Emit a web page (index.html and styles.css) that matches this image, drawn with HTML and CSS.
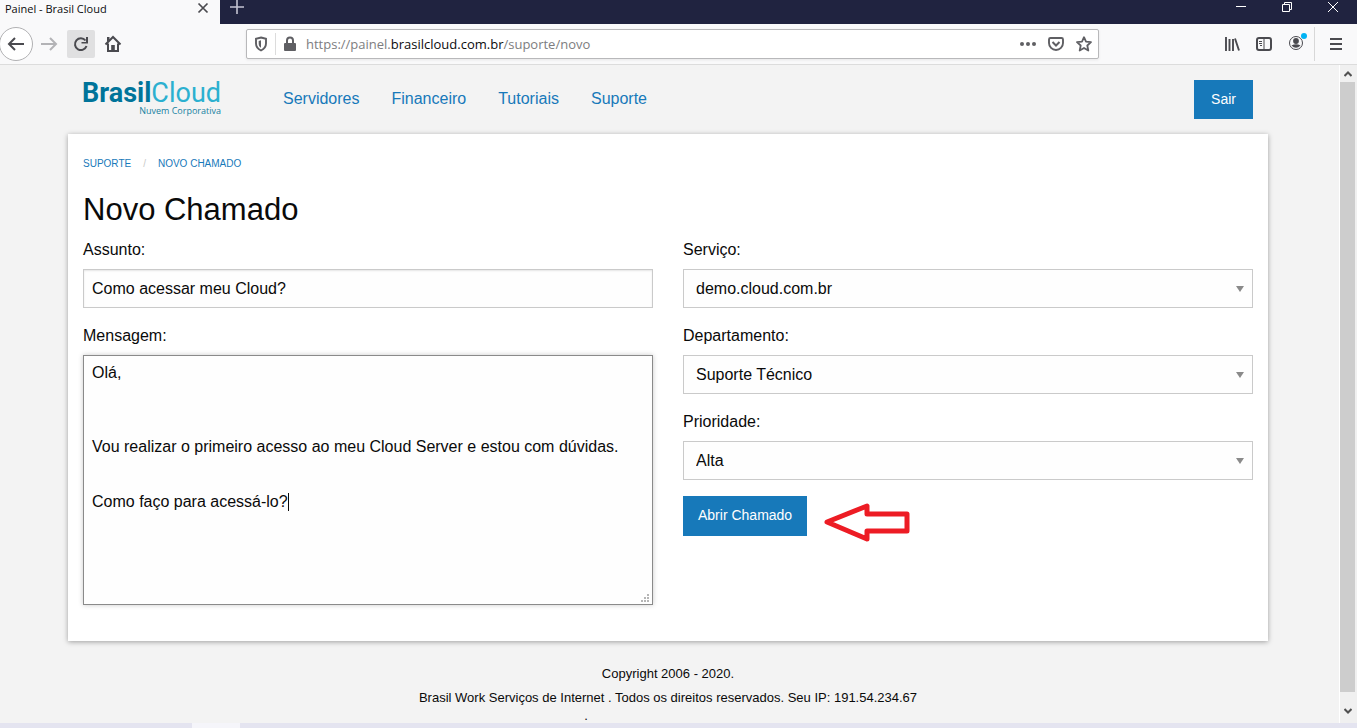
FILE: index.html
```html
<!DOCTYPE html>
<html lang="pt-BR">
<head>
<meta charset="utf-8">
<meta name="viewport" content="width=device-width, initial-scale=1">
<title>Painel - Brasil Cloud</title>
<link rel="stylesheet" href="styles.css">
</head>
<body>
<div class="titlebar">
  <div class="tab">
    <span class="tab-title">Painel - Brasil Cloud</span>
    <button class="icon-btn" aria-label="Fechar aba"><svg width="12" height="12" viewBox="0 0 12 12"><path d="M1.500 1.500l9 9M10.500 1.500l-9 9" stroke="#4a4a4f" stroke-width="1.700"/></svg></button>
  </div>
  <button class="icon-btn new-tab" aria-label="Nova aba"><svg width="14" height="14" viewBox="0 0 14 14"><path d="M7 0v14M0 7h14" stroke="#c4c4d2" stroke-width="1.600"/></svg></button>
  <div class="window-controls">
    <button class="icon-btn" aria-label="Minimizar"><svg width="12" height="12" viewBox="0 0 12 12"><path d="M1 5.500h10" stroke="#fff"/></svg></button>
    <button class="icon-btn" aria-label="Restaurar"><svg width="12" height="12" viewBox="0 0 12 12"><path d="M1.500 3.500h7v7h-7zM3.500 3.500v-2h7v7h-2" fill="none" stroke="#fff"/></svg></button>
    <button class="icon-btn" aria-label="Fechar"><svg width="12" height="12" viewBox="0 0 12 12"><path d="M1 1l10 10M11 1L1 11" stroke="#fff"/></svg></button>
  </div>
</div>

<div class="toolbar">
  <div class="nav-buttons">
    <button class="icon-btn back" aria-label="Voltar"><svg width="18" height="16" viewBox="0 0 18 16"><path d="M8 2L2 8l6 6M2 8h15" fill="none" stroke="#4a4a4f" stroke-width="2"/></svg></button>
    <button class="icon-btn forward" aria-label="Avançar"><svg width="18" height="16" viewBox="0 0 18 16"><path d="M10 2l6 6-6 6M16 8H1" fill="none" stroke="#b3b3b6" stroke-width="2"/></svg></button>
    <button class="icon-btn reload" aria-label="Recarregar"><svg width="16" height="16" viewBox="0 0 16 16"><path d="M12.500 4.500A5.900 5.900 0 1 0 13.500 10" fill="none" stroke="#4a4a4f" stroke-width="2"/><path d="M15 1v6.500H8.500V6H13V1z" fill="#4a4a4f"/></svg></button>
    <button class="icon-btn home" aria-label="Início"><svg width="18" height="18" viewBox="0 0 18 18"><path d="M1.500 9.500L9 2l7.500 7.500M4 8.500V16h10V8.500" fill="none" stroke="#4a4a4f" stroke-width="2"/><path d="M7.200 15v-5h3.600v5M3 2h2.500v3L3 7z" fill="#4a4a4f"/></svg></button>
  </div>
  <div class="urlbar">
    <svg class="shield" width="14" height="16" viewBox="0 0 14 16"><path d="M7 1.500l5 1.300v4.700c0 3.500-2 5.500-5 7-3-1.500-5-3.500-5-7V2.800z" fill="none" stroke="#5f5f63" stroke-width="1.900"/><path d="M7 4.300v7.500C5.300 10.800 4.700 9.500 4.700 7.500V4.900z" fill="#5f5f63"/></svg>
    <span class="divider"></span>
    <svg class="lock" width="12" height="16" viewBox="0 0 12 16"><path d="M3 8V4.500a3 3 0 0 1 6 0V8" fill="none" stroke="#5f5f63" stroke-width="2"/><rect y="7" width="12" height="8" rx="1" fill="#5f5f63"/></svg>
    <span class="url">https://painel.<b>brasilcloud.com.br</b>/suporte/novo</span>
    <div class="url-actions">
      <svg width="16" height="16" viewBox="0 0 16 16" fill="#5f5f63"><circle cx="2" cy="8" r="2"/><circle cx="8" cy="8" r="2"/><circle cx="14" cy="8" r="2"/></svg>
      <svg width="16" height="16" viewBox="0 0 16 16"><path d="M2.500 2h11q1.500 0 1.500 1.500V7A7 7 0 0 1 1 7V3.500Q1 2 2.500 2z" fill="none" stroke="#5f5f63" stroke-width="1.900"/><path d="M4.500 6L8 9.500 11.500 6" fill="none" stroke="#5f5f63" stroke-width="2"/></svg>
      <svg width="16" height="16" viewBox="0 0 16 16"><path d="M8 1.200l2 4.500 5 .5-3.700 3.300 1 5L8 12l-4.300 2.500 1-5L1 6.200l5-.5z" fill="none" stroke="#5f5f63" stroke-width="1.800" stroke-linejoin="round"/></svg>
    </div>
  </div>
  <div class="tools">
    <svg width="16" height="16" viewBox="0 0 16 16"><path d="M2 1v14M5.500 3v12M9 3v12M11 2.500L15 14.500" fill="none" stroke="#4a4a4f" stroke-width="1.900"/></svg>
    <svg width="16" height="16" viewBox="0 0 16 16"><rect x="1" y="2" width="14" height="12" rx="2" fill="none" stroke="#4a4a4f" stroke-width="2"/><path d="M8 2v12M3 5.500h3M3 7.500h3M4 9.500h2" stroke="#4a4a4f"/></svg>
    <svg class="account" width="20" height="20" viewBox="0 0 20 20"><circle cx="8" cy="11" r="6.500" fill="none" stroke="#4a4a4f"/><circle cx="8" cy="9" r="2.900" fill="#4a4a4f"/><path d="M3.500 13.500q4.500-2.500 9 0Q8 18 3.500 13.500z" fill="#4a4a4f"/><circle cx="16" cy="4" r="3" fill="#00b3f4"/></svg>
    <button class="icon-btn menu" aria-label="Menu"><svg width="12" height="14" viewBox="0 0 12 14"><path d="M0 2h12M0 7h12M0 12h12" stroke="#4a4a4f" stroke-width="2"/></svg></button>
  </div>
</div>

<div class="viewport">
  <div class="page">
    <header class="site-header">
      <a class="logo" href="#"><span class="logo-name"><strong>Brasil</strong>Cloud</span><span class="logo-tag">Nuvem Corporativa</span></a>
      <nav class="site-nav">
        <a href="#">Servidores</a><a href="#">Financeiro</a><a href="#">Tutoriais</a><a href="#">Suporte</a>
      </nav>
      <button class="btn btn-exit">Sair</button>
    </header>

    <main class="card">
      <nav class="breadcrumb" aria-label="Navegação"><a href="#">SUPORTE</a><span class="slash">/</span><a href="#">NOVO CHAMADO</a></nav>
      <h1 class="title">Novo Chamado</h1>
      <form class="form">
        <div class="column">
          <label class="label" for="assunto">Assunto:</label>
          <input class="field" id="assunto" type="text" value="Como acessar meu Cloud?">
          <label class="label" for="mensagem">Mensagem:</label>
          <div class="message-wrap">
            <textarea class="field message" id="mensagem">Olá,



Vou realizar o primeiro acesso ao meu Cloud Server e estou com dúvidas.


Como faço para acessá-lo?</textarea>
            <span class="caret"></span>
            <svg class="grip" width="8" height="8" viewBox="0 0 8 8" fill="#b5b5b5"><path d="M6 0h2v2H6zM3 3h2v2H3zM6 3h2v2H6zM0 6h2v2H0zM3 6h2v2H3zM6 6h2v2H6z"/></svg>
          </div>
        </div>
        <div class="column">
          <label class="label" for="servico">Serviço:</label>
          <div class="select-wrap"><select class="field select" id="servico"><option>demo.cloud.com.br</option></select></div>
          <label class="label" for="departamento">Departamento:</label>
          <div class="select-wrap"><select class="field select" id="departamento"><option>Suporte Técnico</option></select></div>
          <label class="label" for="prioridade">Prioridade:</label>
          <div class="select-wrap"><select class="field select" id="prioridade"><option>Alta</option></select></div>
          <div class="submit-row">
            <button class="btn btn-submit" type="button">Abrir Chamado</button>
            <svg class="arrow" width="86" height="40" viewBox="0 0 86 40"><path d="M3 20L43 4v8h40v17H43v8z" fill="none" stroke="#ed1c24" stroke-width="5" stroke-linejoin="round"/></svg>
          </div>
        </div>
      </form>
    </main>

    <footer class="footer">
      <p>Copyright 2006 - 2020.</p>
      <p>Brasil Work Serviços de Internet . Todos os direitos reservados. Seu IP: 191.54.234.67</p>
      <p class="footer-dot">.</p>
    </footer>
  </div>
  <div class="scrollbar">
    <svg width="8" height="6" viewBox="0 0 8 6"><path d="M.5 5L4 1.500 7.500 5" fill="none" stroke="#505050" stroke-width="2"/></svg>
    <div class="thumb"></div>
    <svg width="8" height="6" viewBox="0 0 8 6"><path d="M.5 1L4 4.500 7.500 1" fill="none" stroke="#505050" stroke-width="2"/></svg>
  </div>
</div>
<div class="taskbar"><span class="taskbar-item"></span></div>
</body>
</html>
```
FILE: styles.css
```css
* { box-sizing: border-box; }

body {
  margin: 0;
  min-height: 100vh;
  display: flex;
  flex-direction: column;
  background: #f3f3f3;
  color: #0a0a0a;
  font: 16px/24px "Liberation Sans", Arial, sans-serif;
}

svg { display: block; flex: none; }
a { color: #1779ba; text-decoration: none; }
p { margin: 0; }

.icon-btn {
  display: flex;
  align-items: center;
  justify-content: center;
  padding: 0;
  border: 0;
  background: none;
}

/* Browser chrome */
.titlebar {
  display: flex;
  height: 24px;
  background: #202340;
}
.tab {
  display: flex;
  justify-content: space-between;
  width: 220px;
  height: 24px;
  padding: 0 11px 0 5px;
  background: #f9f9fa;
  color: #0c0c0d;
  font: 11px/18px "Open Sans", sans-serif;
}
.tab .icon-btn { height: 16px; }
.new-tab { height: 14px; margin-left: 10px; }
.window-controls {
  display: flex;
  gap: 34px;
  margin-left: auto;
  padding: 1px 18px 0 0;
}
.window-controls .icon-btn { height: 12px; }

.toolbar {
  display: flex;
  align-items: center;
  height: 41px;
  background: #f9f9fa;
  border-bottom: 1px solid #dcdcdc;
}
.nav-buttons {
  display: flex;
  align-items: center;
  width: 246px;
}
.back {
  width: 34px;
  height: 34px;
  margin-left: -1px;
  border: 1px solid #b1b1b3;
  border-radius: 50%;
  background: #fff;
}
.forward { margin-left: 7px; }
.reload {
  width: 28px;
  height: 28px;
  margin-left: 9px;
  border-radius: 2px;
  background: #e0e0e1;
}
.home { margin-left: 9px; }
.urlbar {
  display: flex;
  flex: 1;
  align-items: center;
  height: 30px;
  padding: 0 6px 0 7px;
  background: #fff;
  border: 1px solid #b8b8ba;
  border-radius: 2px;
  box-shadow: 0 1px 3px rgba(0, 0, 0, 0.08);
}
.divider {
  width: 1px;
  height: 22px;
  margin: 0 8px 0 7px;
  background: #dcdcdc;
}
.url {
  margin-left: 10px;
  color: #7d7d80;
  font: 13px/18px "Open Sans", sans-serif;
}
.url b { color: #0c0c0d; font-weight: 400; }
.url-actions { display: flex; gap: 12px; margin-left: auto; }
.tools {
  display: flex;
  align-items: center;
  height: 100%;
  gap: 16px;
  padding-left: 125px;
  padding-right: 1px;
}
.account { margin-bottom: 4px; }
.menu {
  width: 42px;
  height: 34px;
  margin-left: -10px;
  border-left: 1px solid #d8d8d8;
}

/* Page area */
.viewport { display: flex; flex: 1; }
.page { flex: 1; padding: 0 71px 0 68px; }

.scrollbar {
  display: flex;
  flex-direction: column;
  align-items: center;
  gap: 5px;
  width: 18px;
  padding: 6px 2px 9px 0;
  border-left: 1px solid #fff;
  background: #f0f0f0;
}
.scrollbar svg:last-child { margin-top: 11px; }
.thumb { flex: 1; width: 100%; background: #cdcdcd; }

.site-header {
  display: flex;
  align-items: flex-start;
  height: 69px;
  padding: 15px 15px 0;
}
.logo {
  display: flex;
  flex-direction: column;
  align-items: flex-end;
  width: 138px;
}
.logo-name {
  color: #2bb0d0;
  font: 27px/26px Roboto, "Liberation Sans", sans-serif;
}
.logo-name strong { color: #00749a; }
.logo-tag {
  color: #1782a2;
  font: 9px/10px "Open Sans", sans-serif;
}
.site-nav {
  display: flex;
  gap: 32px;
  margin-left: 62px;
  line-height: 38px;
}
.btn {
  border: 0;
  background: #1779ba;
  color: #fefefe;
  font: 14px/16px "Liberation Sans", Arial, sans-serif;
}
.btn-exit { height: 39px; margin-left: auto; padding: 0 17px 1px; }

.card {
  padding: 16px 15px 20px;
  background: #fff;
  box-shadow: 0 1px 5px rgba(0, 0, 0, 0.35);
}
.breadcrumb {
  display: flex;
  gap: 12px;
  font-size: 10px;
  line-height: 28px;
}
.slash { color: #cacaca; }
.title {
  margin: 10px 0 6px;
  font-size: 31px;
  font-weight: 400;
  line-height: 44px;
}
.form {
  display: grid;
  grid-template-columns: 1fr 1fr;
  gap: 30px;
}
.label { display: block; margin-bottom: 7px; }
.field {
  display: block;
  width: 100%;
  height: 39px;
  margin: 0 0 16px;
  padding: 0 8px;
  border: 1px solid #cacaca;
  border-radius: 0;
  background: #fefefe;
  color: #0a0a0a;
  font: 16px/24px "Liberation Sans", Arial, sans-serif;
  box-shadow: inset 0 1px 2px rgba(10, 10, 10, 0.1);
}
.message-wrap, .select-wrap { position: relative; }
.message {
  height: 250px;
  padding: 8px;
  border-color: #8a8a8a;
  line-height: 1.15;
  resize: none;
  overflow: hidden;
  box-shadow: 0 0 5px #cacaca;
}
.caret {
  position: absolute;
  left: 205px;
  top: 138px;
  width: 1px;
  height: 18px;
  background: #0a0a0a;
}
.grip { position: absolute; right: 4px; bottom: 3px; }
.select {
  appearance: none;
  padding: 0 24px 0 12px;
  box-shadow: none;
}
.select-wrap::after {
  content: "";
  position: absolute;
  right: 9px;
  top: 17px;
  border: 4px solid transparent;
  border-top: 6px solid #8a8a8a;
  border-bottom: 0;
  pointer-events: none;
}
.submit-row { display: flex; align-items: flex-start; gap: 17px; }
.btn-submit { height: 40px; padding: 0 15px 2px; }
.arrow { margin-top: 6px; }

.footer {
  padding-top: 21px;
  font-size: 13px;
  text-align: center;
}
.footer-dot { padding-right: 164px; line-height: 12px; }

.taskbar { height: 5px; padding-left: 192px; background: #e4e4f0; }
.taskbar-item { display: block; width: 48px; height: 5px; background: #f5f5fa; }
```
